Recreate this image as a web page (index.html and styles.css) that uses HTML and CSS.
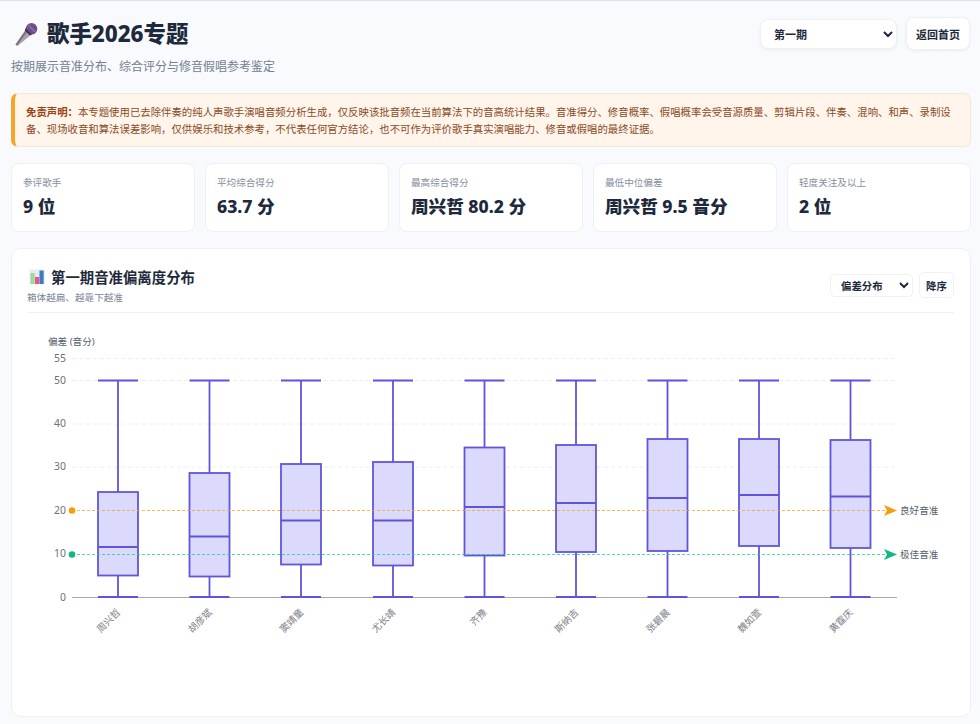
FILE: index.html
```html
<!DOCTYPE html>
<html lang="zh-CN">
<head>
<meta charset="utf-8">
<title>歌手2026专题</title>
<link rel="stylesheet" href="styles.css">
</head>
<body>
<div class="page">
  <header class="top">
    <div class="top-text">
      <h1 class="title">
        <svg class="mic" viewBox="0 0 24 24" width="24" height="24" aria-hidden="true">
          <path d="M1.500 22.500 L12 7.500 L17.500 12.500 L3.500 24 Z" fill="#a8a2ac"/>
          <path d="M1.500 22.500 L12 7.500 L13.800 9.100 L3 23.400 Z" fill="#7b747f"/>
          <circle cx="17.500" cy="6.800" r="5.800" fill="#6b4f8c"/>
          <path d="M11.400 6.200 L18 12.800 L15.800 13.200 L10.800 8.600 Z" fill="#3d2f50"/>
          <path d="M14 2.800 L21.200 10" stroke="#8d74ab" stroke-width="1.500"/>
        </svg>
        <span>歌手2026专题</span>
      </h1>
      <p class="subtitle">按期展示音准分布、综合评分与修音假唱参考鉴定</p>
    </div>
    <div class="top-actions">
      <select class="select select-main"><option>第一期</option></select>
      <button class="btn btn-main" type="button">返回首页</button>
    </div>
  </header>

  <aside class="notice"><strong>免责声明&#xFF1A;</strong>本专题使用已去除伴奏的纯人声歌手演唱音频分析生成&#xFF0C;仅反映该批音频在当前算法下的音高统计结果。音准得分、修音概率、假唱概率会受音源质量、剪辑片段、伴奏、混响、和声、录制设备、现场收音和算法误差影响&#xFF0C;仅供娱乐和技术参考&#xFF0C;不代表任何官方结论&#xFF0C;也不可作为评价歌手真实演唱能力、修音或假唱的最终证据。</aside>

  <section class="stats">
    <div class="stat"><div class="stat-label">参评歌手</div><div class="stat-value">9 位</div></div>
    <div class="stat"><div class="stat-label">平均综合得分</div><div class="stat-value">63.7 分</div></div>
    <div class="stat"><div class="stat-label">最高综合得分</div><div class="stat-value">周兴哲 80.2 分</div></div>
    <div class="stat"><div class="stat-label">最低中位偏差</div><div class="stat-value">周兴哲 9.5 音分</div></div>
    <div class="stat"><div class="stat-label">轻度关注及以上</div><div class="stat-value">2 位</div></div>
  </section>

  <section class="card">
    <div class="card-head">
      <div>
        <h2 class="card-title">
          <svg class="bars" viewBox="0 0 16 16" width="16" height="16" aria-hidden="true">
            <rect x="0.500" y="0.500" width="15" height="15" fill="#e9ebf0"/>
            <rect x="1.500" y="4" width="4.200" height="11" fill="#9bdc94"/>
            <rect x="6" y="8" width="4.200" height="7" fill="#e9548e"/>
            <rect x="10.500" y="1.500" width="4.200" height="13.500" fill="#3a7cc6"/>
          </svg>
          <span>第一期音准偏离度分布</span>
        </h2>
        <p class="card-sub">箱体越扁、越靠下越准</p>
      </div>
      <div class="card-actions">
        <select class="select select-small"><option>偏差分布</option></select>
        <button class="btn btn-small" type="button">降序</button>
      </div>
    </div>

    <svg class="chart" viewBox="27 320 927 390" width="927" height="390" role="img" aria-label="音准偏离度箱线图">
      <text class="axis-name" x="48" y="345">偏差 (音分)</text>

      <g class="grid">
        <line x1="72" x2="897" y1="358.500" y2="358.500"/>
        <line x1="72" x2="897" y1="380.500" y2="380.500"/>
        <line x1="72" x2="897" y1="424" y2="424"/>
        <line x1="72" x2="897" y1="467" y2="467"/>
      </g>

      <g class="ticks">
        <text x="66" y="361.500">55</text>
        <text x="66" y="383.500">50</text>
        <text x="66" y="427">40</text>
        <text x="66" y="470">30</text>
        <text x="66" y="513.500">20</text>
        <text x="66" y="557">10</text>
        <text x="66" y="600.500">0</text>
      </g>

      <line class="axis" x1="72" x2="897" y1="597.500" y2="597.500"/>

      <g class="boxes">
        <g><path d="M98 380.500H138M118 380.500V492M118 575.500V597M98 597H138"/><rect x="98" y="492" width="40" height="83.500"/><path d="M98 547H138"/></g>
        <g><path d="M189.500 380.500H229.500M209.500 380.500V473M209.500 576.500V597M189.500 597H229.500"/><rect x="189.500" y="473" width="40" height="103.500"/><path d="M189.500 536.500H229.500"/></g>
        <g><path d="M281 380.500H321M301 380.500V464M301 564.500V597M281 597H321"/><rect x="281" y="464" width="40" height="100.500"/><path d="M281 520.500H321"/></g>
        <g><path d="M373 380.500H413M393 380.500V462M393 565.500V597M373 597H413"/><rect x="373" y="462" width="40" height="103.500"/><path d="M373 520.500H413"/></g>
        <g><path d="M464.500 380.500H504.500M484.500 380.500V447.500M484.500 555.500V597M464.500 597H504.500"/><rect x="464.500" y="447.500" width="40" height="108"/><path d="M464.500 507H504.500"/></g>
        <g><path d="M556 380.500H596M576 380.500V445M576 552V597M556 597H596"/><rect x="556" y="445" width="40" height="107"/><path d="M556 503H596"/></g>
        <g><path d="M647.500 380.500H687.500M667.500 380.500V439M667.500 551V597M647.500 597H687.500"/><rect x="647.500" y="439" width="40" height="112"/><path d="M647.500 498H687.500"/></g>
        <g><path d="M739 380.500H779M759 380.500V439M759 546V597M739 597H779"/><rect x="739" y="439" width="40" height="107"/><path d="M739 495H779"/></g>
        <g><path d="M830.500 380.500H870.500M850.500 380.500V440M850.500 548V597M830.500 597H870.500"/><rect x="830.500" y="440" width="40" height="108"/><path d="M830.500 496.500H870.500"/></g>
      </g>

      <line class="mark-good" x1="72" x2="886" y1="510.500" y2="510.500"/>
      <line class="mark-best" x1="72" x2="886" y1="554.500" y2="554.500"/>
      <circle class="dot-good" cx="72" cy="510.500" r="3.300"/>
      <circle class="dot-best" cx="72" cy="554.500" r="3.300"/>
      <path class="dot-good" d="M884 505 L897 510.500 L884 516 L887 510.500 Z"/>
      <path class="dot-best" d="M884 549 L897 554.500 L884 560 L887 554.500 Z"/>
      <text class="mark-label" x="900" y="513.500">良好音准</text>
      <text class="mark-label" x="900" y="557.500">极佳音准</text>

      <g class="names">
        <text transform="translate(121 613) rotate(-45)">周兴哲</text>
        <text transform="translate(212.500 613) rotate(-45)">胡彦斌</text>
        <text transform="translate(304 613) rotate(-45)">窦靖童</text>
        <text transform="translate(396 613) rotate(-45)">尤长靖</text>
        <text transform="translate(487.500 613) rotate(-45)">齐豫</text>
        <text transform="translate(579 613) rotate(-45)">斯纳吉</text>
        <text transform="translate(670.500 613) rotate(-45)">张碧晨</text>
        <text transform="translate(762 613) rotate(-45)">魏如萱</text>
        <text transform="translate(853.500 613) rotate(-45)">黄霆庆</text>
      </g>
    </svg>
  </section>
</div>
</body>
</html>
```

FILE: styles.css
```css
* { box-sizing: border-box; }

html, body { margin: 0; height: 100%; }

body {
  background: #f8fafd;
  color: #1e293b;
  font-family: "Noto Sans CJK SC", "Noto Sans", sans-serif;
  overflow: hidden;
}

.page {
  border-top: 1px solid #d3e4ec;
  padding: 0 9px 0 11px;
}

.top {
  display: flex;
  justify-content: space-between;
  align-items: flex-start;
  height: 92px;
  padding: 16px 1px 0 0;
}

.title {
  display: flex;
  align-items: center;
  gap: 9px;
  margin: 0 0 0 3px;
  height: 34px;
  font-family: "Noto Sans", "Noto Sans CJK SC", sans-serif;
  font-size: 22.4px;
  font-weight: 800;
  line-height: 34px;
}

.mic { flex: none; }

.subtitle {
  margin: 6px 0 0;
  font-size: 12px;
  line-height: 17px;
  color: #748091;
}

.top-actions {
  display: flex;
  align-items: center;
  gap: 9px;
}

.select {
  font-family: inherit;
  font-weight: 600;
  color: #1e293b;
  background-color: #fff;
  border: 1px solid #eef1f6;
}

.select-main {
  width: 137px;
  height: 30px;
  padding: 0 9px;
  font-size: 11px;
  border-radius: 8px;
  box-shadow: 0 1px 3px rgba(15, 23, 42, 0.06);
}

.btn {
  font-family: inherit;
  font-weight: 600;
  color: #1e293b;
  background: #fff;
  border: 1px solid #eef1f6;
  padding: 0;
}

.btn-main {
  width: 64px;
  height: 33px;
  font-size: 11px;
  border-radius: 8px;
  box-shadow: 0 1px 3px rgba(15, 23, 42, 0.06);
}

.notice {
  height: 54px;
  padding: 10px 15px 0 11px;
  font-size: 10.4px;
  line-height: 16.8px;
  color: #8a4a26;
  background: #fff5eb;
  border: 1px solid #f5e6d8;
  border-left: 4px solid #f4a62a;
  border-radius: 7px;
}

.notice strong {
  color: #9a3f12;
  font-weight: 700;
}

.stats {
  display: grid;
  grid-template-columns: repeat(5, 1fr);
  gap: 10px;
  margin-top: 16px;
}

.stat {
  height: 69px;
  padding: 11px 11px 0;
  background: #fff;
  border: 1px solid #edf1f6;
  border-radius: 8px;
}

.stat-label {
  font-size: 9.6px;
  line-height: 15px;
  color: #858f9c;
}

.stat-value {
  margin-top: 4px;
  font-family: "Noto Sans", "Noto Sans CJK SC", sans-serif;
  font-size: 17.6px;
  line-height: 25px;
  font-weight: 800;
}

.card {
  height: 469px;
  margin-top: 16px;
  padding: 0 16px 0 15px;
  background: #fff;
  border: 1px solid #edf1f6;
  border-radius: 10px;
}

.card-head {
  display: flex;
  justify-content: space-between;
  align-items: flex-start;
  height: 64px;
  padding-top: 17px;
  border-bottom: 1px solid #edf0f4;
}

.card-title {
  display: flex;
  align-items: center;
  gap: 6px;
  margin: 0 0 0 2px;
  font-size: 14.4px;
  line-height: 22px;
  font-weight: 700;
}

.bars { flex: none; }

.card-sub {
  margin: 2px 0 0;
  font-size: 9.6px;
  line-height: 15px;
  color: #7c8796;
}

.card-actions {
  display: flex;
  align-items: center;
  gap: 6px;
  margin-top: 6px;
}

.select-small {
  width: 83px;
  height: 23px;
  padding: 0 6px;
  font-size: 10.4px;
  border-radius: 5px;
}

.btn-small {
  width: 35px;
  height: 26px;
  font-size: 10.4px;
  border-radius: 5px;
}

.chart {
  display: block;
  margin-top: 7px;
  font-family: "Noto Sans", "Noto Sans CJK SC", sans-serif;
}

.axis-name { font-size: 9.6px; fill: #555f6b; }

.grid line {
  stroke: #eceef1;
  stroke-width: 1;
  stroke-dasharray: 4 3;
}

.ticks text {
  font-size: 10.4px;
  fill: #6e7079;
  text-anchor: end;
}

.axis { stroke: #a4a7ae; stroke-width: 1; }

.boxes path {
  fill: none;
  stroke: #5f55dc;
  stroke-width: 1.8;
}

.boxes rect {
  fill: #dcdafc;
  stroke: #5f55dc;
  stroke-width: 1.8;
}

.mark-good {
  stroke: #f5a623;
  stroke-width: 1.2;
  stroke-dasharray: 3 2;
  opacity: 0.75;
}

.mark-best {
  stroke: #1fc79a;
  stroke-width: 1.2;
  stroke-dasharray: 3 2;
  opacity: 0.75;
}

.dot-good { fill: #f59e0b; }
.dot-best { fill: #10b981; }

.mark-label { font-size: 9.6px; fill: #555f6b; }

.names text {
  font-size: 9.6px;
  fill: #7d8088;
  text-anchor: end;
}
```
